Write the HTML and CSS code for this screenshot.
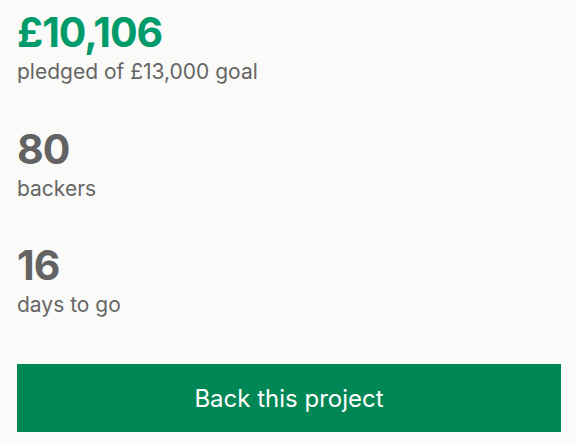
FILE: index.html
```html
<!DOCTYPE html>
<html>
<head>
<meta charset="utf-8">
<link rel="stylesheet" href="styles.css">
</head>
<body>
<div class="panel">
  <div class="stat">
    <div class="value value-green">£10,106</div>
    <div class="label">pledged of £13,000 goal</div>
  </div>
  <div class="stat">
    <div class="value">80</div>
    <div class="label">backers</div>
  </div>
  <div class="stat">
    <div class="value">16</div>
    <div class="label">days to go</div>
  </div>
  <button class="back-btn">Back this project</button>
</div>
</body>
</html>
```
FILE: styles.css
```css
html, body {
  margin: 0;
  padding: 0;
  background: #fafaf9;
}
body {
  font-family: Inter, "Noto Sans", sans-serif;
}
.panel {
  display: flex;
  flex-direction: column;
  gap: 36.5px;
  padding: 7px 15px 0 17px;
}
.stat {
  display: flex;
  flex-direction: column;
}
.value {
  font-size: 41px;
  line-height: 50px;
  font-weight: 700;
  color: #636363;
  letter-spacing: -1px;
}
.value-green {
  color: #009b6b;
}
.label {
  font-size: 21px;
  line-height: 30px;
  color: #666666;
}
.back-btn {
  margin-top: 7.5px;
  height: 68px;
  border: none;
  background: #008755;
  color: #ffffff;
  font-family: Inter, "Noto Sans", sans-serif;
  font-size: 24px;
  width: 100%;
  padding: 0;
}
```
